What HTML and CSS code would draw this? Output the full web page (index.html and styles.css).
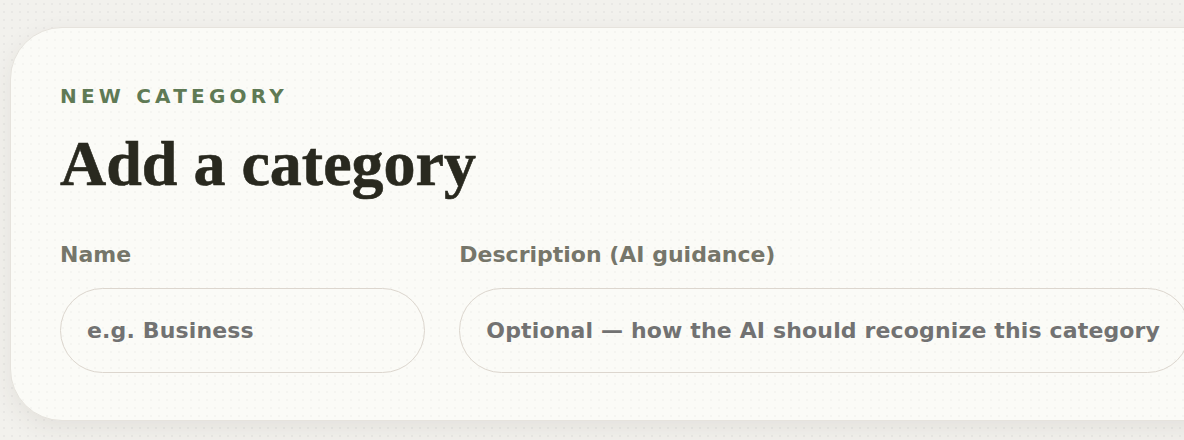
FILE: index.html
```html
<!DOCTYPE html>
<html lang="en">
<head>
    <meta charset="UTF-8">
    <meta name="viewport" content="width=device-width, initial-scale=1.0">
    <title>Add a category</title>
    <link rel="stylesheet" href="styles.css">
</head>
<body>

<section class="card">
    <p class="eyebrow">New category</p>
    <h1>Add a category</h1>

    <form class="category-form">
        <div class="field">
            <label for="name">Name</label>
            <input type="text" id="name" placeholder="e.g. Business">
        </div>
        <div class="field">
            <label for="description">Description (AI guidance)</label>
            <input type="text" id="description" placeholder="Optional — how the AI should recognize this category">
        </div>
    </form>
</section>

</body>
</html>
```

FILE: styles.css
```css
/* Reset */
* {
    margin: 0;
    padding: 0;
    box-sizing: border-box;
}

/* Page */
body {
    font-family: "DejaVu Sans", Verdana, sans-serif;
    background-color: #f2f1ed;
    background-image: radial-gradient(rgba(0, 0, 0, 0.035) 1px, transparent 1.2px);
    background-size: 8px 8px;
    color: #2d2d25;
    padding: 27px 0 0 10px;
    overflow: hidden;
    height: 440px;
}

/* Card */
.card {
    width: 1231px;
    padding: 56px 50px 47px 49px;
    background-color: #fbfbf7;
    background-image: radial-gradient(rgba(0, 0, 0, 0.025) 1px, transparent 1.2px);
    background-size: 8px 8px;
    border: 1px solid #e6e3dd;
    border-radius: 52px;
    box-shadow: 0 8px 24px rgba(60, 55, 40, 0.08);
}

.eyebrow {
    font-size: 20px;
    font-weight: 700;
    letter-spacing: 4.2px;
    text-transform: uppercase;
    color: #5f7a55;
    line-height: 24px;
}

h1 {
    font-family: "Liberation Serif", serif;
    font-size: 64px;
    font-weight: 700;
    line-height: 72px;
    margin-top: 20px;
    color: #29291f;
    -webkit-text-stroke: 0.6px #29291f;
}

/* Form */
.category-form {
    display: grid;
    grid-template-columns: 1fr 2fr;
    gap: 34px;
    margin-top: 42px;
}

.field label {
    display: block;
    font-size: 22px;
    font-weight: 700;
    color: #76766a;
    line-height: 26px;
    margin-bottom: 20px;
}

.field input {
    width: 100%;
    height: 85px;
    padding: 0 26px;
    font-family: inherit;
    font-size: 22px;
    font-weight: 700;
    letter-spacing: 0.15px;
    color: #333;
    background: transparent;
    border: 1.5px solid #dcd6ce;
    border-radius: 999px;
    outline: none;
}

.field input::placeholder {
    color: #727272;
}
```
